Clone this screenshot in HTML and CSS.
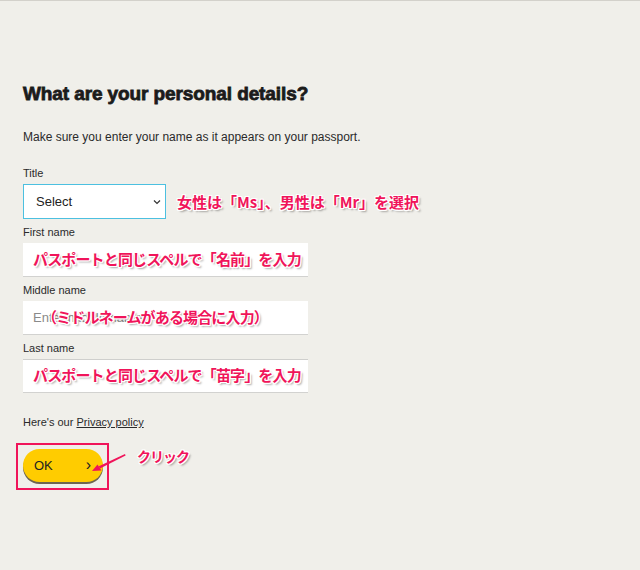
FILE: index.html
```html
<!DOCTYPE html>
<html>
<head>
  <meta charset="utf-8">
  <link rel="stylesheet" href="styles.css">
</head>
<body>
  <div class="page">
    <h1 class="heading">What are your personal details?</h1>
    <p class="intro">Make sure you enter your name as it appears on your passport.</p>

    <div class="field">
      <label class="field-label" for="title">Title</label>
      <div class="select-row">
        <div class="select-wrap">
          <select id="title" class="select">
            <option>Select</option>
            <option>Mr</option>
            <option>Ms</option>
          </select>
          <svg class="chevron" width="8" height="6" viewBox="0 0 8 6">
            <path d="M1 1.5 L4 4.5 L7 1.5" fill="none" stroke="#333" stroke-width="1.2"/>
          </svg>
        </div>
        <span class="note">女性は「Ms」、男性は「Mr」を選択</span>
      </div>
    </div>

    <div class="field">
      <label class="field-label" for="firstName">First name</label>
      <div class="input-wrap">
        <input type="text" id="firstName" class="text-input">
        <span class="note note-over">パスポートと同じスペルで「名前」を入力</span>
      </div>
    </div>

    <div class="field">
      <label class="field-label" for="middleName">Middle name</label>
      <div class="input-wrap">
        <input type="text" id="middleName" class="text-input" placeholder="Enter middle name">
        <span class="note note-over note-middle">（ミドルネームがある場合に入力）</span>
      </div>
    </div>

    <div class="field">
      <label class="field-label" for="lastName">Last name</label>
      <div class="input-wrap">
        <input type="text" id="lastName" class="text-input text-input-last">
        <span class="note note-over">パスポートと同じスペルで「苗字」を入力</span>
      </div>
    </div>

    <p class="privacy">Here's our <a href="#">Privacy policy</a></p>

    <div class="submit-area">
      <div class="highlight">
        <button class="ok-btn">
          <span>OK</span>
          <span class="ok-arrow">›</span>
        </button>
      </div>
      <svg class="pointer" width="45" height="28" viewBox="0 0 45 28">
        <polygon points="38,4 38.6,5.4 13,18.5 11.8,16.2" fill="#f0145a"/>
        <polygon points="5,21 10.5,14.5 14.5,20.5" fill="#f0145a"/>
      </svg>
      <span class="note note-click">クリック</span>
    </div>
  </div>
</body>
</html>
```

FILE: styles.css
```css
* {
  margin: 0;
  padding: 0;
  box-sizing: border-box;
}

body {
  width: 640px;
  height: 570px;
  overflow: hidden;
  background: #f0efea;
  border-top: 1px solid #d3d1cb;
  font-family: 'Liberation Sans', Arial, sans-serif;
  color: #222;
}

.page {
  padding: 83px 0 0 23px;
}

.heading {
  font-size: 19px;
  font-weight: 700;
  color: #1b1b1b;
  -webkit-text-stroke: 0.8px #1b1b1b;
  line-height: 20px;
  letter-spacing: -0.1px;
}

.intro {
  margin-top: 25px;
  font-size: 12px;
  line-height: 16px;
  color: #2a2a2a;
}

.field {
  margin-top: 6px;
}

.field:first-of-type {
  margin-top: 21px;
}

.field-label {
  display: block;
  font-size: 11px;
  line-height: 14px;
  margin-bottom: 4px;
  color: #2a2a2a;
}

.select-row {
  display: flex;
  align-items: center;
  gap: 11px;
}

.select-wrap {
  position: relative;
  width: 143px;
  height: 35px;
}

.select {
  -webkit-appearance: none;
  appearance: none;
  width: 100%;
  height: 100%;
  padding: 0 0 0 12px;
  border: 1px solid #4cc0e0;
  border-radius: 0;
  background: #fff;
  font-family: inherit;
  font-size: 13px;
  color: #222;
  outline: none;
}

.chevron {
  position: absolute;
  top: 15px;
  right: 5px;
}

.input-wrap {
  position: relative;
  width: 285px;
  height: 34px;
}

.text-input {
  width: 100%;
  height: 100%;
  border: none;
  border-bottom: 1px solid #d2d2d0;
  background: #fff;
  padding: 0 10px;
  font-family: inherit;
  font-size: 13px;
  color: #222;
  outline: none;
}

.text-input::placeholder {
  color: #8a8a8a;
}

.text-input-last {
  border-top: 1px solid #cfcfcd;
}

.note {
  font-family: 'Noto Sans CJK JP', sans-serif;
  font-weight: 700;
  font-size: 15px;
  color: #f0145a;
  white-space: nowrap;
  text-shadow:
    -1px -1px 0 #fff, 1px -1px 0 #fff, -1px 1px 0 #fff, 1px 1px 0 #fff,
    0 -1px 0 #fff, 0 1px 0 #fff, -1px 0 0 #fff, 1px 0 0 #fff,
    2px 2px 2px rgba(0, 0, 0, 0.35);
}

.note-over {
  position: absolute;
  left: 10px;
  top: 5px;
  letter-spacing: -0.85px;
  line-height: 22px;
}

.note-middle {
  left: 19px;
}

.privacy {
  margin-top: 22px;
  font-size: 11px;
  line-height: 14px;
  color: #2a2a2a;
}

.privacy a {
  color: #2a2a2a;
}

.submit-area {
  position: relative;
  margin: 14px 0 0 -7px;
  height: 47px;
}

.highlight {
  width: 93px;
  height: 47px;
  border: 2px solid #f0145a;
  padding: 4px 0 0 5px;
}

.ok-btn {
  display: flex;
  align-items: center;
  justify-content: space-between;
  width: 80px;
  height: 33px;
  padding: 0 12px 0 11px;
  border: none;
  border-radius: 17px;
  background: #ffcc00;
  box-shadow: 0 2px 0 #6d6550;
  font-family: inherit;
  font-size: 13px;
  color: #222;
}

.ok-arrow {
  font-size: 16px;
  line-height: 1;
  margin-top: -1px;
}

.pointer {
  position: absolute;
  left: 71px;
  top: 7px;
}

.note-click {
  position: absolute;
  left: 121px;
  top: 3px;
  font-size: 14px;
  letter-spacing: -1px;
  line-height: 20px;
}
```
